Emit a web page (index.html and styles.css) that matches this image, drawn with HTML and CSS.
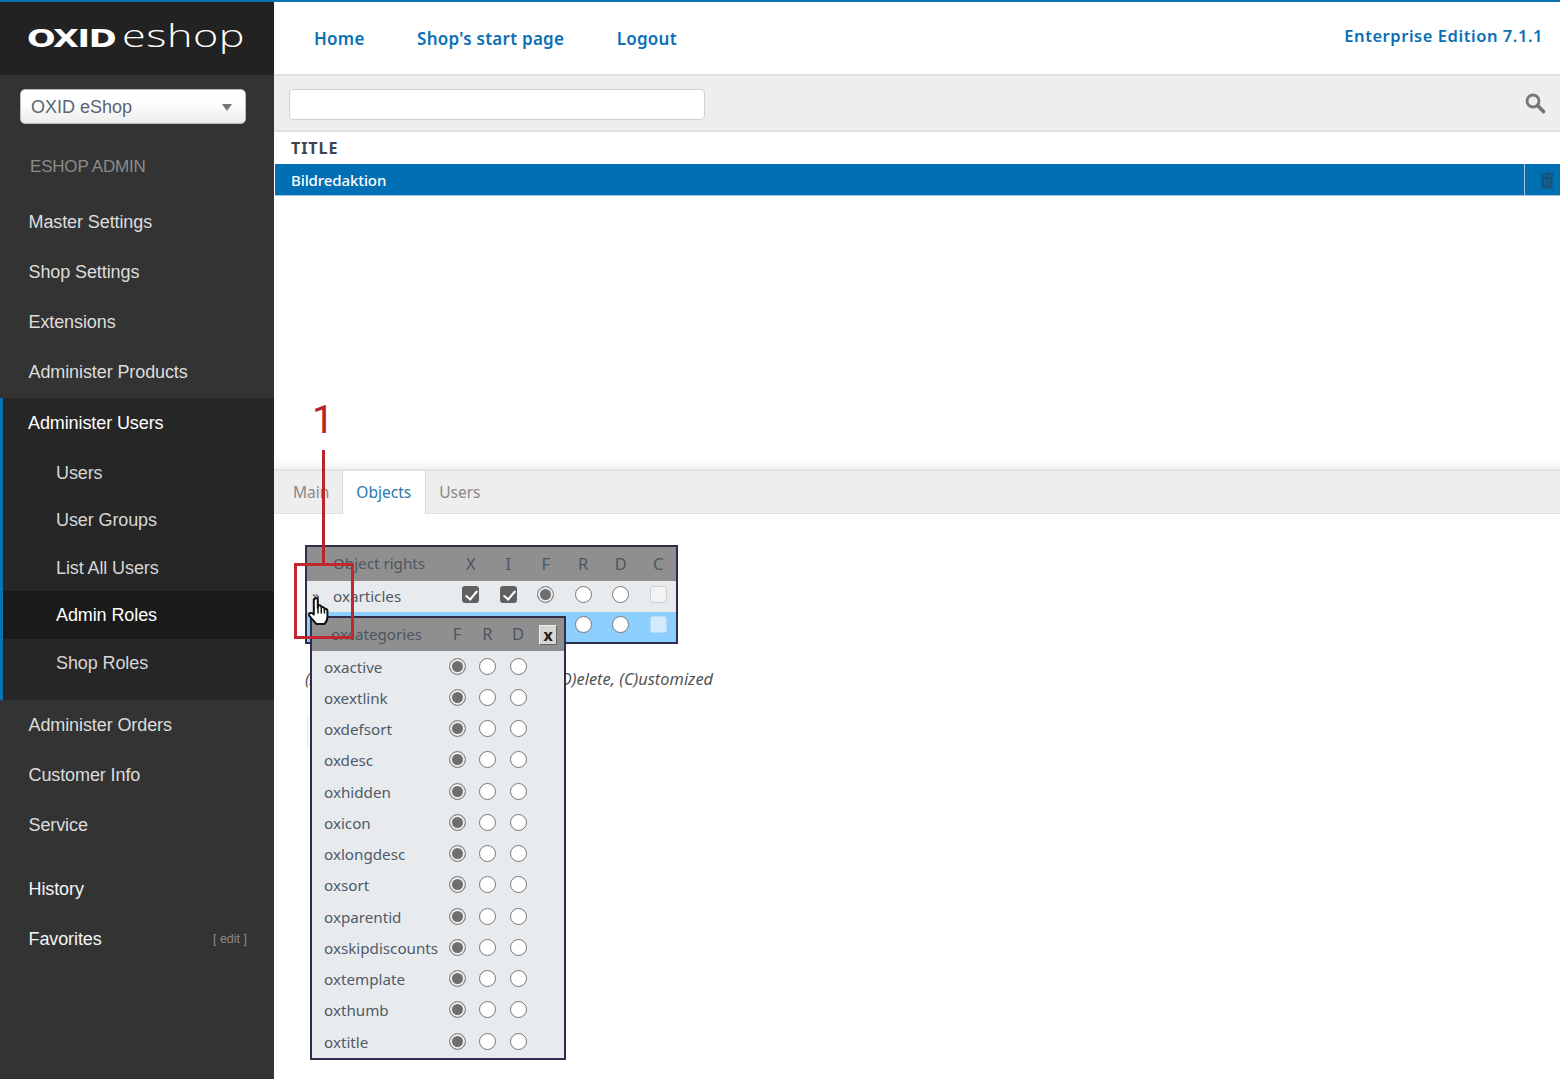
FILE: index.html
```html
<!DOCTYPE html>
<html lang="en">
<head>
<meta charset="utf-8">
<title>OXID eShop Admin</title>
<link rel="stylesheet" href="styles.css">
</head>
<body>
<div class="app">
  <aside class="side">
    <div class="logo"><span class="logo-a">OXID</span><span class="logo-b">eshop</span></div>
    <div class="shop-select"><span>OXID eShop</span><i class="caret"></i></div>
    <div class="side-title">ESHOP ADMIN</div>
    <nav class="nav">
      <a class="nav-item">Master Settings</a>
      <a class="nav-item">Shop Settings</a>
      <a class="nav-item">Extensions</a>
      <a class="nav-item">Administer Products</a>
      <div class="group">
        <a class="group-head">Administer Users</a>
        <a class="sub">Users</a>
        <a class="sub">User Groups</a>
        <a class="sub">List All Users</a>
        <a class="sub sub-on">Admin Roles</a>
        <a class="sub">Shop Roles</a>
      </div>
      <a class="nav-item">Administer Orders</a>
      <a class="nav-item">Customer Info</a>
      <a class="nav-item">Service</a>
      <a class="nav-item nav-gap nav-white">History</a>
      <a class="nav-item nav-white nav-fav"><span>Favorites</span><small>[ edit ]</small></a>
    </nav>
  </aside>
  <main class="main">
    <header class="top">
      <a class="top-link">Home</a>
      <a class="top-link">Shop's start page</a>
      <a class="top-link">Logout</a>
      <span class="edition">Enterprise Edition 7.1.1</span>
    </header>
    <div class="search">
      <div class="search-input"></div>
      <svg class="search-icon" width="22" height="22" viewBox="0 0 22 22"><circle cx="9" cy="9" r="6" fill="none" stroke="#757575" stroke-width="2.8"/><path d="M13.5 13.5 L19.5 19.5" stroke="#757575" stroke-width="3.6" stroke-linecap="round"/></svg>
    </div>
    <div class="list-head">TITLE</div>
    <div class="list-row">
      <span class="list-title">Bildredaktion</span>
      <span class="list-del"><svg width="14" height="18" viewBox="0 0 14 18"><path d="M5 1h4v1.500h4.500v2H.5v-2H5zM1.500 5.500h11V17.500h-11z" fill="#175178"/><path d="M4.500 8v7M7 8v7M9.500 8v7" stroke="#0b6aa6" stroke-width="1"/></svg></span>
    </div>
    <div class="list-space"></div>
    <nav class="tabs">
      <a class="tab">Main</a>
      <a class="tab tab-on">Objects</a>
      <a class="tab">Users</a>
    </nav>
    <section class="content">
      <div class="rights">
        <div class="r-row r-head"><span class="r-name">Object rights</span><span>X</span><span>I</span><span>F</span><span>R</span><span>D</span><span>C</span></div>
        <div class="r-row r-body">
          <span class="r-name"><b class="r-arrow">»</b>oxarticles</span>
          <span><i class="chk on"></i></span><span><i class="chk on"></i></span><span><i class="rad on"></i></span><span><i class="rad"></i></span><span><i class="rad"></i></span><span><i class="chk off"></i></span>
        </div>
        <div class="r-row r-body r-sel">
          <span class="r-name"><b class="r-arrow">»</b>oxcategories</span>
          <span><i class="chk on"></i></span><span><i class="chk on"></i></span><span><i class="rad on"></i></span><span><i class="rad"></i></span><span><i class="rad"></i></span><span><i class="chk off"></i></span>
        </div>
      </div>
      <p class="legend">(X)Exclude, (I)nclude, (F)ull, (R)ead, (D)elete, (C)ustomized</p>
      <div class="save-stub"></div>

      <div class="popup">
        <div class="p-row p-head"><span class="p-name">oxcategories</span><span class="p-col">F</span><span class="p-col">R</span><span class="p-col">D</span><button class="p-close">x</button></div>
        <div class="p-row"><span class="p-name">oxactive</span><i class="rad on"></i><i class="rad"></i><i class="rad"></i></div>
        <div class="p-row"><span class="p-name">oxextlink</span><i class="rad on"></i><i class="rad"></i><i class="rad"></i></div>
        <div class="p-row"><span class="p-name">oxdefsort</span><i class="rad on"></i><i class="rad"></i><i class="rad"></i></div>
        <div class="p-row"><span class="p-name">oxdesc</span><i class="rad on"></i><i class="rad"></i><i class="rad"></i></div>
        <div class="p-row"><span class="p-name">oxhidden</span><i class="rad on"></i><i class="rad"></i><i class="rad"></i></div>
        <div class="p-row"><span class="p-name">oxicon</span><i class="rad on"></i><i class="rad"></i><i class="rad"></i></div>
        <div class="p-row"><span class="p-name">oxlongdesc</span><i class="rad on"></i><i class="rad"></i><i class="rad"></i></div>
        <div class="p-row"><span class="p-name">oxsort</span><i class="rad on"></i><i class="rad"></i><i class="rad"></i></div>
        <div class="p-row"><span class="p-name">oxparentid</span><i class="rad on"></i><i class="rad"></i><i class="rad"></i></div>
        <div class="p-row"><span class="p-name">oxskipdiscounts</span><i class="rad on"></i><i class="rad"></i><i class="rad"></i></div>
        <div class="p-row"><span class="p-name">oxtemplate</span><i class="rad on"></i><i class="rad"></i><i class="rad"></i></div>
        <div class="p-row"><span class="p-name">oxthumb</span><i class="rad on"></i><i class="rad"></i><i class="rad"></i></div>
        <div class="p-row"><span class="p-name">oxtitle</span><i class="rad on"></i><i class="rad"></i><i class="rad"></i></div>
      </div>
    </section>
  </main>
</div>

<div class="mark-num">1</div>
<div class="mark-line"></div>
<div class="mark-box"></div>
<svg class="hand" width="24" height="30" viewBox="0 0 24 30">
  <path d="M8 2.500c1.300-1 2.800-.3 2.800 1.200v8l.6-2c1.400-.7 2.600-.3 2.900 1l.2.800c1.300-.8 2.500-.4 2.900.8l.2.800c1.300-.6 2.600 0 2.800 1.400v6.500c0 3-1.500 5.500-3 7H9.500c-2-2.300-4.500-4.800-7-8-.9-1.300-.4-2.500.8-3 1-.4 2.200.2 3.500 1.500V4c0-.7.200-1.200 1.700-1.500z" fill="#fff" stroke="#111" stroke-width="2" stroke-linejoin="round"/>
  <path d="M11 11.500v6M14.300 12v5.500M17.400 13v4.500" stroke="#111" stroke-width="1.500" fill="none"/>
</svg>
</body>
</html>
```

FILE: styles.css
```css
* { box-sizing: border-box; }
html, body { margin: 0; padding: 0; height: 1079px; overflow: hidden; background: #fff; }
body { font-family: "Noto Sans", "Open Sans", sans-serif; color: #555; position: relative; }
a { display: block; }
.app { display: flex; width: 1560px; height: 1079px; border-top: 2px solid #0a6fb3; }

/* sidebar */
.side { width: 274px; flex: none; background: #333; font-family: "Liberation Sans", Arial, sans-serif; }
.logo { height: 73px; background: #222; display: flex; align-items: center; padding: 0 0 1px 27px; color: #fff; white-space: nowrap; }
.logo-a { font-family: "DejaVu Sans", sans-serif; font-weight: 700; font-size: 25px; letter-spacing: -1px; display: inline-block; transform: scaleX(1.345); transform-origin: left center; width: 86px; line-height: 1; }
.logo-b { font-family: "Open Sans", sans-serif; font-weight: 300; font-size: 32px; line-height: 1; margin-left: 9px; letter-spacing: .4px; display: inline-block; transform: scaleX(1.35); transform-origin: left center; margin-top: -7px; }
.shop-select { margin: 14px 28px 0 20px; height: 35px; border-radius: 5px; background: linear-gradient(#fff 35%, #ececec); border: 1px solid #bbb; display: flex; align-items: center; justify-content: space-between; padding: 1px 13px 0 10px; font-size: 18px; color: #5b6573; }
.caret { width: 0; height: 0; border-left: 5px solid transparent; border-right: 5px solid transparent; border-top: 7px solid #777; }
.side-title { margin: 32px 0 0 30px; height: 21px; line-height: 22px; font-size: 17px; color: #8b8b8b; letter-spacing: -.2px; }
.nav { margin-top: 20px; font-size: 18px; letter-spacing: -.1px; color: #ddd; }
.nav-item { height: 50px; line-height: 51px; padding: 0 27px 0 28.500px; }
.group { margin-top: 1px; height: 302px; background: #262626; border-left: 3px solid #0a6fb3; }
.group-head { height: 50.500px; line-height: 51px; padding-left: 25px; color: #fff; }
.sub { height: 47.500px; line-height: 48px; padding-left: 53px; color: #d6d6d6; }
.sub-on { background: #1a1a1a; color: #fff; }
.nav-gap { margin-top: 13.500px; }
.nav-white { color: #f5f5f5; line-height: 50px; }
.nav-fav { display: flex; justify-content: space-between; }
.nav-fav small { font-size: 12.500px; color: #8c8c8c; letter-spacing: 0; }

/* main */
.main { flex: 1; min-width: 0; display: flex; flex-direction: column; position: relative; }
.top { height: 72px; display: flex; align-items: center; padding: 0 17px 0 40px; gap: 52.500px; font-weight: 600; font-size: 17px; color: #0b6fb5; letter-spacing: .25px; }
.edition { margin-left: auto; margin-top: -5px; font-size: 16.500px; letter-spacing: .55px; }
.search { height: 58px; background: #eee; border-top: 2px solid #e0e0e0; border-bottom: 2px solid #e0e0e0; display: flex; align-items: center; justify-content: space-between; padding: 3px 14px 0 15px; }
.search-input { width: 416px; height: 31px; background: #fff; border: 1px solid #d0d0d0; border-radius: 4px; }
.search-icon { margin-top: -3px; }
.list-head { height: 32px; line-height: 32px; padding-left: 17px; font-weight: 700; font-size: 16px; color: #3f4450; letter-spacing: .95px; }
.list-row { height: 32px; margin-left: 1px; background: #006fb3; display: flex; align-items: center; justify-content: space-between; color: #fff; font-size: 15px; font-weight: 500; letter-spacing: -.1px; padding-left: 16px; border-bottom: 1px solid #a8c8de; }
.list-del { width: 36px; height: 31px; border-left: 1px solid #a7c6dc; display: flex; align-items: center; justify-content: center; padding-left: 9px; }
.list-space { height: 275px; background: linear-gradient(#fff 262px, #f4f4f4); border-bottom: 2px solid #e2e2e2; }
.tabs { height: 43px; background: #eee; border-bottom: 1px solid #e2e2e2; display: flex; padding-left: 5px; font-size: 15.500px; color: #888; }
.tab { padding: 0 14px 0 13px; line-height: 43px; border-right: 1px solid #ddd; }
.tabs .tab:first-child { padding-left: 14px; padding-right: 13px; }
.tabs .tab:last-child { border: 0; }
.tab-on { background: #fff; color: #2a79ad; height: 43px; }
.content { flex: 1; position: relative; padding: 31px 0 0 31px; }

/* rights table */
.rights { width: 373px; border: 2px solid #2e2e4a; background: #e8ebee; }
.r-row { width: 100%; display: grid; grid-template-columns: 1fr repeat(6, 37.500px); align-items: center; justify-items: center; font-size: 15.200px; color: #4f5a68; }
.r-name { justify-self: start; padding-left: 26px; position: relative; margin-top: -2px; }
.r-head { height: 34px; background: #8f8f8f; color: #4d5560; }
.r-head > span:not(.r-name) { font-size: 16.500px; margin-top: -2px; }
.r-body { height: 31px; background: #e8ebee; }
.r-body > span:not(.r-name) { margin-top: -5px; }
.r-sel { background: #8ccfff; height: 30px; }
.r-arrow { position: absolute; left: 5px; top: -1px; font-weight: 400; color: #555; }
.chk, .rad { display: block; width: 17px; height: 17px; }
.r-head > span:not(.r-name), .r-body > span:not(.r-name) { transform: translateX(1px); }
.chk.on { background: #616161; border-radius: 3px; position: relative; }
.chk.on::after { content: ""; position: absolute; left: 6px; top: 2px; width: 5px; height: 10px; border: solid #fff; border-width: 0 2px 2px 0; transform: rotate(40deg); }
.chk.off { background: #f3f3f3; border: 1px solid #cfcfcf; border-radius: 3px; }
.r-sel .chk.off { background: #d4e9f9; border-color: #b5dcf7; }
.rad { border-radius: 50%; background: #fff; border: 1.500px solid #777; }
.rad.on { background: #6e6e6e; border-color: #8a8a8a; box-shadow: inset 0 0 0 2px #efefef; }
.legend { margin: 25px 0 0; font-size: 16.400px; font-style: italic; color: #555; white-space: nowrap; line-height: 20px; }
.save-stub { margin: 27px 0 0 2px; width: 40px; height: 33px; border: 1px solid #e8e8e8; border-radius: 3px; background: #fcfcfc; }

/* popup */
.popup { position: absolute; left: 36px; top: 102px; width: 256px; background: #e8ebee; border: 2px solid #2e2e4a; }
.p-row { display: grid; grid-template-columns: 117.500px 31px 30px 31px; justify-items: center; height: 31.250px; align-items: center; font-size: 15.200px; color: #4f5a68; padding-left: 12px; }
.p-row .p-name { justify-self: start; white-space: nowrap; }
.p-row .rad { margin-top: -1px; }
.p-row:last-child { height: 32px; }
.p-head { height: 33px; background: #8f8f8f; color: #4d5560; position: relative; }
.p-head .p-name { margin: -2px 0 0 7px; }
.p-col { font-size: 16.500px; margin-top: -2px; }
.p-close { position: absolute; left: 227px; top: 7px; width: 18px; height: 20px; padding: 0; background: #d9d5cf; border: 1px solid; border-color: #eee #666 #666 #eee; font: 700 16px/16px "Noto Sans", sans-serif; color: #222; }

/* annotation overlay */
.mark-num { position: absolute; left: 312px; top: 398px; font: 400 39px/44px Roboto, sans-serif; color: #b9232e; }
.mark-line { position: absolute; left: 322px; top: 450px; width: 3px; height: 114px; background: #b9232e; }
.mark-box { position: absolute; left: 294px; top: 563px; width: 60px; height: 76px; border: 3px solid #c1272d; }
.hand { position: absolute; left: 307px; top: 596px; }
```
